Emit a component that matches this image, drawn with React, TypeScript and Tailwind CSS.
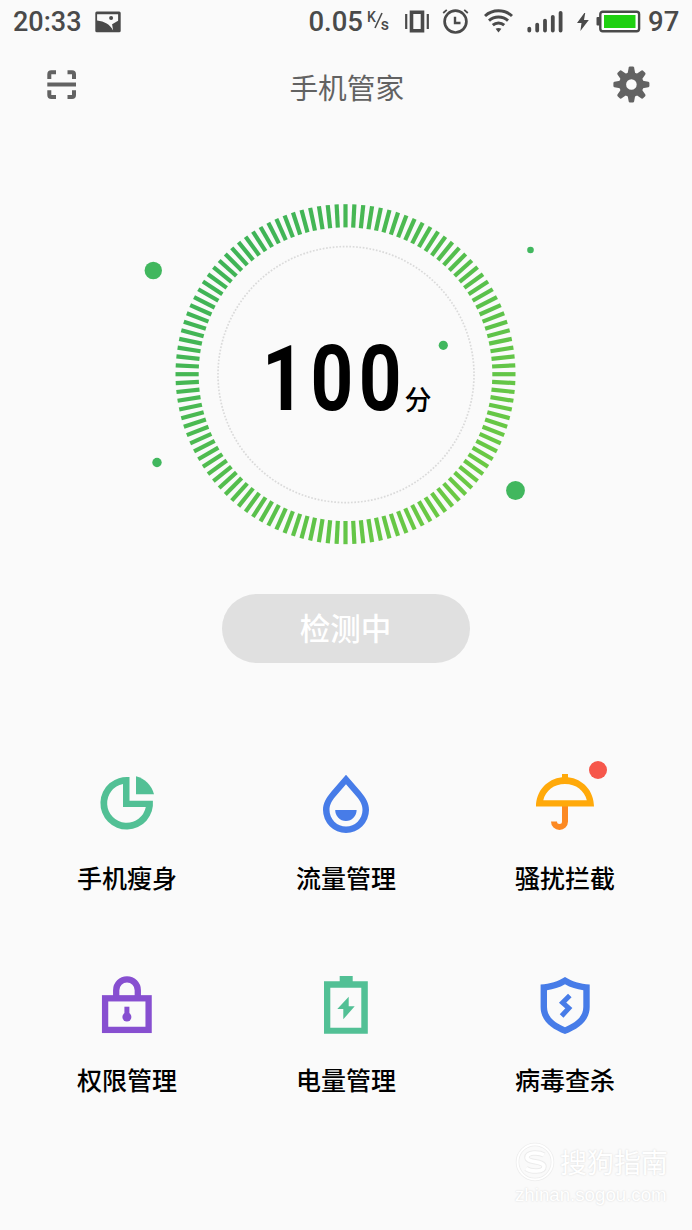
import type { ReactNode } from "react";

const GREEN = "#41b75e";

const ticks = Array.from({ length: 120 }, (_, i) => i * 3);

const StatusBar = () => (
  <div className="flex h-[43px] items-center pl-[13px] pr-[13px] font-['Roboto',sans-serif] text-[27px] font-medium leading-none text-[#4a4a4a]">
    <span className="w-[69px] pt-px">20:33</span>
    <svg className="ml-[13px]" width="27" height="22" viewBox="0 0 27 22">
      <rect x="0.3" y="0.5" width="25.4" height="20.8" rx="1.5" fill="#4a4a4a" />
      <path d="M2.1 3.2H23.1V9.8L17.1 13.2L18.1 19.4C15 13.6 9.5 10.4 2.1 9.6Z" fill="#fafafa" />
      <circle cx="16.1" cy="7" r="2" fill="#4a4a4a" />
    </svg>

    <span className="ml-auto text-[27.5px]">0.05</span>
    <span className="ml-1 flex h-6 w-[25px] text-[14px]">
      <span>K</span>
      <svg className="-ml-0.5 mt-0.5" width="9" height="19" viewBox="0 0 9 19">
        <path d="M8 1L1 16" stroke="#4a4a4a" strokeWidth="1.6" />
      </svg>
      <span className="-ml-0.5 mt-[7px] text-[16px]">s</span>
    </span>
    <svg className="ml-[13px]" width="24" height="24" viewBox="0 0 24 24" fill="none" stroke="#4a4a4a">
      <path d="M1.2 4V19M22.8 4V19" strokeWidth="2.2" />
      <path d="M6.5 2.2H17.5V20.8H6.5Z" strokeWidth="3.6" />
    </svg>
    <svg className="ml-[13px]" width="27" height="25" viewBox="0 0 27 25" fill="none" stroke="#4a4a4a">
      <circle cx="13.5" cy="12.6" r="10.9" strokeWidth="2.7" />
      <path d="M13 7.8V14H18.5" strokeWidth="2.4" />
      <path d="M1.2 4L4.8 0.8M25.8 4L22.2 0.8" strokeWidth="1.8" />
    </svg>
    <svg className="ml-[14.5px]" width="29" height="25" viewBox="0 0 29 25" fill="none" stroke="#4a4a4a" strokeWidth="3">
      <path d="M1 7C8.6 0.1 20.4 0.1 28 7" />
      <path d="M5 11.7C10.4 6.9 18.6 6.9 24 11.7" />
      <path d="M8.8 16.2C12.1 13.3 16.9 13.3 20.2 16.2" />
      <path d="M11.6 19.8Q14.5 18 17.4 19.8L14.5 23.6Z" fill="#4a4a4a" stroke="none" />
    </svg>
    <svg className="ml-[14px]" width="36" height="24" viewBox="0 0 36 24" stroke="#4a4a4a" strokeWidth="3.8" strokeLinecap="round">
      <path d="M2.3 18.6V20.5M10.2 14.6V20.5M18 10.6V20.5M25.8 6.8V20.5M33.6 2.8V20.5" />
    </svg>
    <svg className="ml-[13px]" width="14" height="20" viewBox="0 0 14 20">
      <path d="M8.3 1L1 11H5.5L4.4 19L12.8 8H8L9.2 1Z" fill="#4a4a4a" />
    </svg>
    <svg className="ml-[6px]" width="45" height="24" viewBox="0 0 45 24">
      <rect x="0.5" y="7" width="4" height="8.5" rx="1" fill="#4a4a4a" />
      <rect x="4.3" y="1.7" width="38.8" height="19.6" rx="2.5" fill="#fff" stroke="#4a4a4a" strokeWidth="2.4" />
      <rect x="8" y="5" width="31.5" height="13" fill="#1fd011" />
    </svg>
    <span className="ml-[7.5px] w-[31px] text-[27.5px]">97</span>
  </div>
);

const Header = () => (
  <header className="flex h-[84px] items-center justify-between pl-[47px] pr-[42.5px] text-[#626262]">
    <svg className="w-9" width="30" height="30" viewBox="0 0 30 30" preserveAspectRatio="xMinYMid" fill="none" stroke="currentColor" strokeWidth="4">
      <path d="M2.3 9V4.3A2 2 0 0 1 4.3 2.3H9M20.5 2.3H25A2 2 0 0 1 27 4.3V9M27 20.3V25A2 2 0 0 1 25 27H20.5M9 27H4.3A2 2 0 0 1 2.3 25V20.3" />
      <path d="M0.3 14.5H29" />
    </svg>
    <h1 className="pr-px pt-[5px] text-[28.7px] leading-none">手机管家</h1>
    <svg width="38" height="38" viewBox="-19.4 -18.5 38 38" fill="currentColor">
      {[0, 45, 90, 135, 180, 225, 270, 315].map((a) => (
        <path key={a} transform={`rotate(${a})`} d="M-4 -10L-2.7 -17Q-2.4 -18 -1.5 -18H1.5Q2.4 -18 2.7 -17L4 -10Z" />
      ))}
      <circle r="8.8" fill="none" stroke="currentColor" strokeWidth="7" />
    </svg>
  </header>
);

const Gauge = () => (
  <section className="relative h-[390px] mt-[53px]">
    <svg className="block" width="692" height="390" viewBox="0 180 692 390">
      <defs>
        <linearGradient id="ring" gradientUnits="userSpaceOnUse" x1="225" y1="254" x2="466" y2="494">
          <stop offset="0" stopColor="#3eb357" />
          <stop offset="1" stopColor="#6bc944" />
        </linearGradient>
        <mask id="ticks" maskUnits="userSpaceOnUse" x="170" y="200" width="352" height="350">
          {ticks.map((a) => (
            <rect key={a} x="343.4" y="204.2" width="4.2" height="23.2" fill="#fff" transform={`rotate(${a} 345.5 374.2)`} />
          ))}
        </mask>
      </defs>
      <rect x="170" y="200" width="352" height="350" fill="url(#ring)" mask="url(#ticks)" />
      <circle cx="346" cy="374.6" r="128" fill="none" stroke="#dadada" strokeWidth="1.7" strokeDasharray="1.7 1.65" />
      <circle cx="153.3" cy="270.5" r="8.7" fill={GREEN} />
      <circle cx="530.5" cy="250" r="3.3" fill={GREEN} />
      <circle cx="443.3" cy="345.3" r="4.6" fill={GREEN} />
      <circle cx="157" cy="462.5" r="4.7" fill={GREEN} />
      <circle cx="515.5" cy="490.5" r="9.4" fill={GREEN} />
    </svg>
    <div className="absolute left-[262px] top-[154px] flex text-black">
      <span className="w-[142.5px] origin-left scale-x-[0.82] whitespace-nowrap font-['Roboto',sans-serif] text-[91px] font-bold leading-[91px] tracking-[6.8px]">
        10<span className="tracking-normal">0</span>
      </span>
      <span className="mt-[51px] text-[27px] font-medium leading-none">分</span>
    </div>
  </section>
);

const SlimIcon = () => (
  <svg width="60" height="60" viewBox="0 0 60 60" fill="#52c095">
    <path fillRule="evenodd" d="M32.5 3.1V26.7H55.9A26.3 26.3 0 1 1 32.5 3.1ZM26 10.1V33H48.8A19.5 19.5 0 1 1 26 10.1Z" />
    <path d="M39 2.2A25 25 0 0 1 57 20.2H39Z" />
  </svg>
);

const DropIcon = () => (
  <svg width="60" height="60" viewBox="0 0 60 60" fill="#477ce8">
    <path
      fillRule="evenodd"
      d="M30 0.8L44.5 17.5C50 24 53 29.5 53 36A23 23 0 0 1 7 36C7 29.5 10 24 15.5 17.5ZM30 10.3L41 23C45 28 46.5 31.5 46.5 36A16.5 16.5 0 0 1 13.5 36C13.5 31.5 15 28 19 23Z"
    />
    <path d="M19.2 36H40.6A10.7 11 0 0 1 19.2 36Z" />
  </svg>
);

const UmbrellaIcon = () => (
  <svg width="60" height="60" viewBox="0 0 60 60">
    <path d="M30 32V47.5A5.5 5.5 0 0 1 19 47.5" fill="none" stroke="#fc8922" strokeWidth="6" />
    <path fill="#ffa90a" fillRule="evenodd" d="M27 0H33V3.3C48 5 59 17 59 32.6H1C1 17 12 5 27 3.3ZM8.3 26.2H51.8C49.5 16.5 41 9.9 30 9.9S10.5 16.5 8.3 26.2Z" />
  </svg>
);

const LockIcon = () => (
  <svg width="60" height="60" viewBox="0 0 60 60" fill="none" stroke="#874fd0" strokeWidth="6.3">
    <rect x="8.1" y="22.3" width="43.5" height="31.6" />
    <path d="M19.2 22V14.2A10.8 10.8 0 0 1 40.8 14.2V22" />
    <circle cx="29.9" cy="41" r="4.5" fill="#874fd0" stroke="none" />
    <path d="M29.9 30.7V41" strokeWidth="5" />
  </svg>
);

const PowerIcon = () => (
  <svg width="60" height="60" viewBox="0 0 60 60" fill="#52c095">
    <path fillRule="evenodd" d="M23.7 0H36.7V5.3H51.8V57.8H8V5.3H23.7ZM14.3 11.7V51.7H45.3V11.7Z" />
    <path d="M32.7 20.7L21.3 33H27.3V43.3L38.7 30.2H32.7Z" />
  </svg>
);

const ShieldIcon = () => (
  <svg width="60" height="60" viewBox="0 0 60 60" fill="#477ce8">
    <path
      fillRule="evenodd"
      d="M30 1C37 5.5 45 7.8 54.7 8.6V31C54.7 44 44.5 52.5 30 58C15.5 52.5 5.6 44 5.6 31V8.6C15 7.8 23 5.5 30 1ZM30 8.3C24.5 11.5 18.5 13.3 12 14.2V31C12 40.5 19 46.5 30 51.2C41 46.5 48.3 40.5 48.3 31V14.2C41.5 13.3 35.5 11.5 30 8.3Z"
    />
    <path d="M34.8 19.5L27.6 26.7L33.8 32.2L26.6 40" fill="none" stroke="#477ce8" strokeWidth="5" />
  </svg>
);

interface Feature {
  label: string;
  icon: ReactNode;
  badge?: boolean;
}

const features: Feature[] = [
  { label: "手机瘦身", icon: <SlimIcon /> },
  { label: "流量管理", icon: <DropIcon /> },
  { label: "骚扰拦截", icon: <UmbrellaIcon />, badge: true },
  { label: "权限管理", icon: <LockIcon /> },
  { label: "电量管理", icon: <PowerIcon /> },
  { label: "病毒查杀", icon: <ShieldIcon /> },
];

const Watermark = () => (
  <div className="absolute bottom-[22px] right-[22px] w-[155px] text-white [text-shadow:0_0_2px_#d4d4d4]">
    <div className="flex items-center gap-[5px]">
      <svg width="40" height="40" viewBox="0 0 40 40" fill="none">
        <circle cx="20" cy="20" r="17.5" stroke="#ececec" strokeWidth="3.5" />
        <circle cx="20" cy="20" r="17.5" stroke="#fff" strokeWidth="2" />
        <path d="M29 13C24 10 12 10 12 15.5S29 18.5 29 24.5S16 30 11 26.5" stroke="#ececec" strokeWidth="5.5" />
        <path d="M29 13C24 10 12 10 12 15.5S29 18.5 29 24.5S16 30 11 26.5" stroke="#fff" strokeWidth="3.5" />
      </svg>
      <span className="whitespace-nowrap text-[27px] leading-[40px]">搜狗指南</span>
    </div>
    <div className="font-['Liberation_Sans',sans-serif] text-[18.7px] leading-[26px]">zhinan.sogou.com</div>
  </div>
);

const App = () => {
  return (
    <div className="relative h-[1230px] w-[692px] overflow-hidden bg-[#fafafa] font-['Noto_Sans_CJK_SC',sans-serif]">
      <StatusBar />
      <Header />
      <Gauge />

      <button className="mx-auto mt-6 flex h-[69px] w-[248px] items-center justify-center rounded-full bg-[#e0e0e0] pb-[3px] pr-px text-[30.5px] font-medium leading-none text-white">
        检测中
      </button>

      <div className="mt-[111px] grid grid-cols-3 px-[17.5px]">
        {features.map(({ label, icon, badge }) => (
          <div key={label} className="flex h-[202px] flex-col items-center">
            <div className="relative">
              {icon}
              {badge && <span className="absolute -right-3 -top-[13px] size-[18px] rounded-full bg-[#f6574b]" />}
            </div>
            <span className="mt-[31px] text-[25px] font-medium leading-none text-black">{label}</span>
          </div>
        ))}
      </div>

      <Watermark />
    </div>
  );
};

export default App;
